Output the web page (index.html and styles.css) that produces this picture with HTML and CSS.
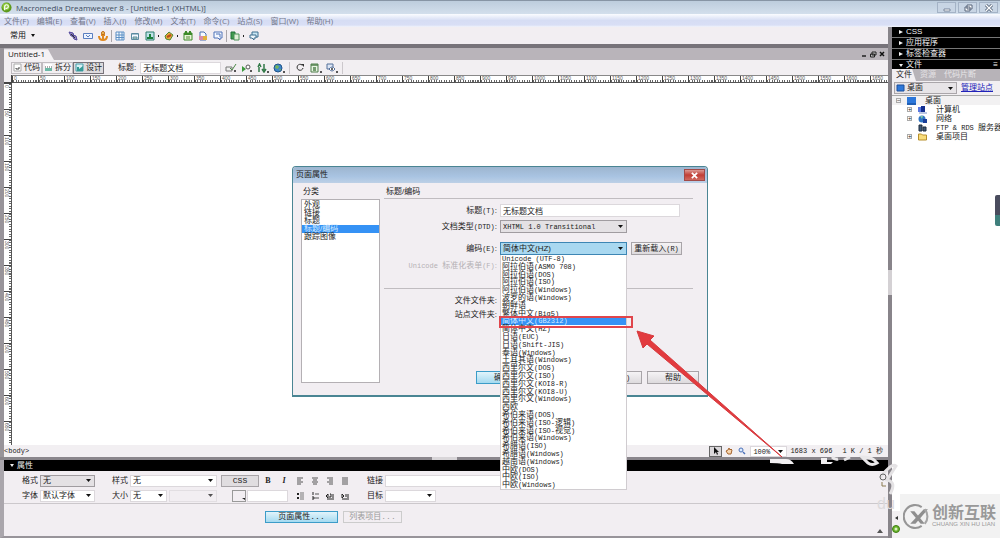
FILE: index.html
```html
<!DOCTYPE html>
<html lang="zh-CN">
<head>
  <meta charset="UTF-8">
  <meta name="viewport" content="width=device-width, initial-scale=1.0">
  <title>Macromedia Dreamweaver 8 - [Untitled-1 (XHTML)]</title>
  <link rel="stylesheet" href="styles.css">
</head>
<body>
  <header class="titlebar">
    <svg class="app-logo" viewBox="0 0 12 12"><circle cx="6" cy="6" r="5.5" fill="#5d9a1c"/><circle cx="5.5" cy="5" r="4" fill="#8cc63a"/><path d="M4 9V5.500Q4 3 6 3T8 5Q8 7 6 7H5" fill="none" stroke="#fff" stroke-width="1.300"/></svg>
    <span class="title">Macromedia Dreamweaver 8 - [Untitled-1 (XHTML)]</span>
    <div class="window-buttons">
      <button aria-label="最小化"><svg viewBox="0 0 10 8"><path d="M2 5h6v2H2z" fill="#fff" stroke="#66758a" stroke-width=".8"/></svg></button>
      <button aria-label="还原"><svg viewBox="0 0 10 8"><path d="M4 1h5v4H4zM2 3h5v4H2z" fill="#fff" stroke="#56657a"/></svg></button>
      <button aria-label="关闭"><svg viewBox="0 0 10 8"><path d="M2 1l6 6M8 1L2 7" stroke="#56657a" stroke-width="3"/><path d="M2 1l6 6M8 1L2 7" stroke="#fff" stroke-width="1.300"/></svg></button>
    </div>
  </header>

  <nav class="menubar">
    <a href="#">文件(F)</a>
    <a href="#">编辑(E)</a>
    <a href="#">查看(V)</a>
    <a href="#">插入(I)</a>
    <a href="#">修改(M)</a>
    <a href="#">文本(T)</a>
    <a href="#">命令(C)</a>
    <a href="#">站点(S)</a>
    <a href="#">窗口(W)</a>
    <a href="#">帮助(H)</a>
  </nav>

  <div class="workspace">
    <main class="main">
      <div class="insert-bar">
        <button class="category">常用 <i class="caret"></i></button>
        <button aria-label="超级链接"><svg viewBox="0 0 10 10"><path d="M1 1l4 1 1 3-3 0zM4 4l4 1 1 4-3-1z" fill="#9a8cc8" stroke="#51479a"/><path d="M3 3l4 4" stroke="#333"/></svg></button>
        <button aria-label="电子邮件链接"><svg viewBox="0 0 10 10"><path d="M.5 2.500h9v5h-9z" fill="#eef4ff" stroke="#5b7fc0"/><path d="M3 4l2 2 2-2" fill="none" stroke="#5b7fc0"/></svg></button>
        <button aria-label="命名锚记"><svg viewBox="0 0 10 10"><path d="M5 2v7M1 5q0 4 4 4t4-4M3 4h4" fill="none" stroke="#e08a20" stroke-width="2"/><circle cx="5" cy="2" r="1.500" fill="#fbd060" stroke="#b8651a"/></svg></button>
        <hr>
        <button aria-label="表格"><svg viewBox="0 0 10 10"><path d="M1 1h8v8H1zM1 4h8M1 6.500h8M4 1v8M7 1v8" fill="#f4f9ff" stroke="#5d8fc4"/></svg></button>
        <button aria-label="插入 Div 标签"><svg viewBox="0 0 10 10"><path d="M1.500 2.500h7v6h-7z" fill="#f4f9ff" stroke="#5a8aa0"/><path d="M2 3h6M3 6h4v2H3z" stroke="#5a8aa0" fill="#b9d6b9"/></svg></button>
        <button class="drop" aria-label="图像"><svg viewBox="0 0 10 10"><path d="M1 1h8v8H1z" fill="#bfe2e8" stroke="#2f7f70"/><path d="M2 8V6h2V3h2v3h2v2z" fill="#1c7f3c"/></svg></button>
        <button class="drop" aria-label="媒体"><svg viewBox="0 0 10 10"><path d="M1 5l4-4 4 3-3 5-4-1z" fill="#e8a83a" stroke="#4f8a34"/><path d="M3 6l4-2" stroke="#b84c1c" stroke-width="2"/></svg></button>
        <button aria-label="日期"><svg viewBox="0 0 10 10"><path d="M1 2h8v7H1z" fill="#e8f4d8" stroke="#3e8a2a"/><path d="M1 3h8M3 0v3M7 0v3" stroke="#3e8a2a" stroke-width="2"/><path d="M4 5v3M6 5v3" stroke="#56883a"/></svg></button>
        <button aria-label="模板"><svg viewBox="0 0 10 10"><path d="M2 1h4l2 2v6H2z" fill="#f6fafe" stroke="#4a6eb0"/><path d="M1 5h4v4H1z" fill="#d88ca8"/><path d="M5 5h4v4H5z" fill="#e2b13c"/></svg></button>
        <button aria-label="注释"><svg viewBox="0 0 10 10"><path d="M1 1h8v6H7v2L5 7H1z" fill="#f4f8ff" stroke="#4f72b8"/><path d="M3 3h4v3" fill="none" stroke="#4f72b8"/></svg></button>
        <hr>
        <button class="drop" aria-label="模板列表"><svg viewBox="0 0 10 10"><path d="M1 1h4v7H1z" fill="#3f9c4e" stroke="#23703a"/><path d="M4 3h5v6H4z" fill="#e0f0d8" stroke="#4c9158"/></svg></button>
        <button aria-label="标签选择器"><svg viewBox="0 0 10 10"><path d="M3 1h6v5H3z" fill="#c9e6f4" stroke="#3d6e90"/><path d="M1 4h6v3H5v2L3 7H1z" fill="#eef6fb" stroke="#3d6e90"/></svg></button>
      </div>

      <section class="document">
        <div class="doc-tabs">
          <a href="#" class="doc-tab">Untitled-1</a>
          <div class="doc-buttons">
            <button aria-label="最小化文档"><svg viewBox="0 0 8 8"><path d="M2 6h4" stroke="#222" stroke-width="1.500"/></svg></button>
            <button aria-label="还原文档"><svg viewBox="0 0 8 8"><path d="M3 2h4v3H3zM1.500 4h4v3h-4z" fill="#bbb" stroke="#222"/></svg></button>
            <button aria-label="关闭文档"><svg viewBox="0 0 8 8"><path d="M2 2l4 4M6 2L2 6" stroke="#111" stroke-width="1.500"/></svg></button>
          </div>
        </div>

        <div class="doc-toolbar">
          <div class="view-buttons">
            <button><svg viewBox="0 0 9 9"><path d="M1 1h7v7H1z" fill="#fff" stroke="#aaa"/><path d="M3 5v1h3V4" fill="none" stroke="#444"/></svg>代码</button>
            <button><svg viewBox="0 0 9 9"><path d="M1 1h7v4H1z" fill="#fff"/><path d="M1 5h7v3H1z" fill="#6cb9a6"/><path d="M1 4h7" stroke="#555" stroke-dasharray="1 1"/></svg>拆分</button>
            <button class="on"><svg viewBox="0 0 9 9"><path d="M1 1h7v7H1z" fill="#d9f1f5" stroke="#45a0ad"/><path d="M2 8V4h2v2l4-3v5z" fill="#369a96"/></svg>设计</button>
          </div>
          <label for="docTitle">标题:</label>
          <input id="docTitle" type="text" value="无标题文档">
          <div class="doc-icons">
            <button aria-label="浏览器检查"><svg viewBox="0 0 12 10"><path d="M1 4h6v4H1z" fill="#eee" stroke="#777"/><path d="M5 5l2 2 4-6" fill="none" stroke="#4d8b48"/><path d="M9 8h2" stroke="#222" stroke-width="1.500"/></svg></button>
            <button aria-label="验证标记"><svg viewBox="0 0 12 10"><path d="M1 3l4 3-4 3z" fill="#3c9a3c"/><circle cx="7" cy="4" r="2" fill="#fff" stroke="#555"/><path d="M9 8h2" stroke="#222" stroke-width="1.500"/></svg></button>
            <button aria-label="文件管理"><svg viewBox="0 0 12 10"><path d="M2 9V4M1 4l1.500-3L4 4M7 1v6M5 6l2 3 2-3" fill="none" stroke="#327a48" stroke-width="1.500"/><path d="M10 9h2" stroke="#222" stroke-width="1.500"/></svg></button>
            <button aria-label="在浏览器中预览"><svg viewBox="0 0 12 10"><circle cx="5" cy="5" r="4" fill="#3f86c9" stroke="#225488"/><path d="M3 2l3 1-1 3-3-1zM6 6h2l-1 2z" fill="#75b75b"/><path d="M10 9h2" stroke="#222" stroke-width="1.500"/></svg></button>
            <hr>
            <button aria-label="刷新"><svg viewBox="0 0 12 10"><path d="M9 5a3 3 0 1 1-1-3" fill="none" stroke="#333"/><path d="M7 1h3v3z" fill="#333"/></svg></button>
            <button aria-label="视图选项"><svg viewBox="0 0 12 10"><path d="M1 1h7v8H1z" fill="#e7f4e2" stroke="#4f7f4a"/><path d="M1 2h7M3 5h3M3 7h3" stroke="#4f7f4a" stroke-width="1.500"/><path d="M10 9h2" stroke="#222" stroke-width="1.500"/></svg></button>
            <button aria-label="可视化助理"><svg viewBox="0 0 12 10"><path d="M1 1h6v5H1z" fill="#dde6f5" stroke="#55709a"/><path d="M3 6q3-4 6 0-3 4-6 0z" fill="#fff" stroke="#55709a"/><circle cx="6" cy="6" r="1" fill="#333"/><path d="M10 9h2" stroke="#222" stroke-width="1.500"/></svg></button>
            <hr>
          </div>
        </div>

        <div class="canvas">
          <div class="corner"></div>
          <div class="ruler ruler-x" id="rulerX"></div>
          <div class="ruler ruler-y" id="rulerY"></div>
          <div class="page"></div>
        </div>

        <div class="statusbar">
          <span class="tag">&lt;body&gt;</span>
          <button class="on" aria-label="选取工具"><svg viewBox="0 0 8 8"><path d="M2 0v7l2-2 1 3 1-1-1-2h2z" fill="#111"/></svg></button>
          <button aria-label="手形工具"><svg viewBox="0 0 8 8"><path d="M1 4l2 3h3l1-4-1-1-1 1-1-2-1 2z" fill="#f6d5ae" stroke="#a5632c"/></svg></button>
          <button aria-label="缩放工具"><svg viewBox="0 0 8 8"><circle cx="3" cy="3" r="2" fill="#dcebff" stroke="#4a70b8"/><path d="M5 5l2 2" stroke="#4a70b8" stroke-width="1.500"/></svg></button>
          <select aria-label="缩放比率"><option>100%</option></select>
          <span class="size">1683 x 696</span>
          <span class="speed">1 K / 1 秒</span>
        </div>
      </section>

      <div class="splitter-x"><i></i></div>

      <section class="properties">
        <h2 class="prop-head"><i class="caret"></i>属性</h2>
        <div class="prop-grid">
          <div class="field"><label for="format">格式</label><select id="format" class="raised"><option>无</option></select></div>
          <div class="field"><label for="style">样式</label><select id="style"><option>无</option></select></div>
          <div class="field"><button class="css-button">CSS</button><button class="letter" aria-label="粗体"><b>B</b></button><button class="letter" aria-label="斜体"><b><i>I</i></b></button></div>
          <div class="field icons">
            <button aria-label="左对齐"><svg viewBox="0 0 8 8"><path d="M1 1h6M1 3h4M1 5h6M1 7h4" stroke="#555"/></svg></button>
            <button aria-label="居中对齐"><svg viewBox="0 0 8 8"><path d="M1 1h6M2 3h4M1 5h6M2 7h4" stroke="#555"/></svg></button>
            <button aria-label="右对齐"><svg viewBox="0 0 8 8"><path d="M1 1h6M3 3h4M1 5h6M3 7h4" stroke="#555"/></svg></button>
            <button aria-label="两端对齐"><svg viewBox="0 0 8 8"><path d="M1 1h6M1 3h6M1 5h6M1 7h6" stroke="#555"/></svg></button>
          </div>
          <div class="field link"><label for="link">链接</label><input id="link" type="text"></div>

          <div class="field"><label for="font">字体</label><select id="font"><option>默认字体</option></select></div>
          <div class="field"><label for="fontSize">大小</label><select id="fontSize" class="small"><option>无</option></select><select class="unit" aria-label="单位" disabled><option></option></select></div>
          <div class="field color"><button class="swatch" aria-label="文本颜色"><svg viewBox="0 0 4 3"><path d="M1 0h3v2z" fill="#222"/></svg></button><input type="text" aria-label="颜色值"></div>
          <div class="field icons">
            <button aria-label="项目列表"><svg viewBox="0 0 8 8"><path d="M1 2h2M1 6h2" stroke="#222" stroke-width="2"/><path d="M4 1h4M4 3h4M4 5h4M4 7h4" stroke="#777"/></svg></button>
            <button aria-label="编号列表"><svg viewBox="0 0 8 8"><path d="M2 0v3M1 5h2v2H1" fill="none" stroke="#222"/><path d="M4 2h4M4 6h4" stroke="#555"/></svg></button>
            <button aria-label="文本凸出"><svg viewBox="0 0 8 8"><path d="M0 4l2-2v4zM4 2h1v3H3M7 2v4M1 7h7" stroke="#222" fill="none"/></svg></button>
            <button aria-label="文本缩进"><svg viewBox="0 0 8 8"><path d="M3 4L1 2v4zM5 2v3M7 2v4M1 7h7" stroke="#222" fill="none"/></svg></button>
          </div>
          <div class="field"><label for="target">目标</label><select id="target" class="target"><option></option></select></div>
        </div>
        <div class="prop-actions">
          <button class="button primary">页面属性...</button>
          <button class="button" disabled>列表项目...</button>
          <svg class="collapse" viewBox="0 0 8 6"><path d="M1 5l3-4 3 4z" fill="#555"/></svg>
        </div>
      </section>
    </main>

    <div class="splitter-y"><i></i></div>

    <aside class="panels">
      <div class="panel-heads">
        <h2><i class="caret closed"></i>CSS</h2>
        <h2><i class="caret closed"></i>应用程序</h2>
        <h2><i class="caret closed"></i>标签检查器</h2>
        <h2><i class="caret"></i>文件<span class="panel-menu">≡</span></h2>
      </div>
      <div class="panel-tabs">
        <a href="#" class="active">文件</a>
        <a href="#">资源</a>
        <a href="#">代码片断</a>
      </div>
      <div class="site-row">
        <svg viewBox="0 0 9 9"><path d="M1 1h7v6H1z" fill="#2f78d8" stroke="#1c4f9c"/></svg>
        <select aria-label="站点"><option>桌面</option></select>
        <a href="#">管理站点</a>
      </div>
      <ul class="tree">
        <li class="root"><span class="box">−</span><svg viewBox="0 0 9 8"><path d="M0 0h9v8H0z" fill="#2c77da"/><path d="M0 7h9" stroke="#15498f"/></svg><span>桌面</span></li>
        <li><span class="box">+</span><svg viewBox="0 0 9 8"><path d="M0 1h4v5H0z" fill="#5a78e0"/><path d="M3 0h4v6H3z" fill="#132f90"/><path d="M1 7h8" stroke="#7b92c8"/></svg><span>计算机</span></li>
        <li><span class="box">+</span><svg viewBox="0 0 9 8"><circle cx="4" cy="4" r="3.500" fill="#2f74c4"/><path d="M2 1l3 0-1 3z" fill="#7cc7a4"/><path d="M5 4h4v4H5z" fill="#1b3f98"/></svg><span>网络</span></li>
        <li><span class="box none"></span><svg viewBox="0 0 9 8"><path d="M1 1h3v6H1zM5 3h3v4H5z" fill="#405a78" stroke="#1c2a3c"/></svg><span><span class="en">FTP &amp; RDS </span>服务器</span></li>
        <li><span class="box">+</span><svg viewBox="0 0 9 8"><path d="M.5 1h3l1 1h4v5h-8z" fill="#f8dc7a" stroke="#b78f2c"/></svg><span>桌面项目</span></li>
      </ul>
      <div class="panel-log">
        <svg viewBox="0 0 8 8"><path d="M6 2v4L3 4z" fill="#333"/></svg>
        <svg viewBox="0 0 8 8"><circle cx="4" cy="4" r="3.500" fill="#6cb52d" stroke="#3e7d15"/><circle cx="4" cy="4" r="1.500" fill="#d9f2c0"/></svg>
      </div>
    </aside>
  </div>

  <form class="dialog" role="dialog" aria-labelledby="dialogTitle">
    <div class="dialog-title">
      <span id="dialogTitle">页面属性</span>
      <button type="button" class="dialog-close" aria-label="关闭"><svg viewBox="0 0 8 8"><path d="M1 1l6 6M7 1L1 7" stroke="#fff" stroke-width="2"/></svg></button>
    </div>
    <div class="dialog-body">
      <div class="categories">
        <h3>分类</h3>
        <ul>
          <li>外观</li>
          <li>链接</li>
          <li>标题</li>
          <li class="selected">标题/编码</li>
          <li>跟踪图像</li>
        </ul>
      </div>
      <div class="settings">
        <h3>标题/编码</h3>
        <div class="rows">
          <label for="pageTitle">标题<span class="en">(T)</span>:</label>
          <input id="pageTitle" type="text" value="无标题文档">
          <label for="doctype">文档类型<span class="en">(DTD)</span>:</label>
          <select id="doctype" class="raised latin"><option>XHTML 1.0 Transitional</option></select>
          <label for="encoding" class="spaced">编码<span class="en">(E)</span>:</label>
          <div class="encoding spaced">
            <select id="encoding" class="raised open"><option>简体中文(HZ)</option></select>
            <button type="button" class="button">重新载入<span class="en">(R)</span></button>
            <ul class="options" role="listbox" aria-label="编码">
              <li><span class="en">Unicode (UTF-8)</span></li>
              <li>阿拉伯语<span class="en">(ASMO 708)</span></li>
              <li>阿拉伯语<span class="en">(DOS)</span></li>
              <li>阿拉伯语<span class="en">(ISO)</span></li>
              <li>阿拉伯语<span class="en">(Windows)</span></li>
              <li>波罗的语<span class="en">(Windows)</span></li>
              <li>朝鲜语</li>
              <li>繁体中文<span class="en">(Big5)</span></li>
              <li class="selected">简体中文<span class="en">(GB2312)</span></li>
              <li>简体中文<span class="en">(HZ)</span></li>
              <li>日语<span class="en">(EUC)</span></li>
              <li>日语<span class="en">(Shift-JIS)</span></li>
              <li>泰语<span class="en">(Windows)</span></li>
              <li>土耳其语<span class="en">(Windows)</span></li>
              <li>西里尔文<span class="en">(DOS)</span></li>
              <li>西里尔文<span class="en">(ISO)</span></li>
              <li>西里尔文<span class="en">(KOI8-R)</span></li>
              <li>西里尔文<span class="en">(KOI8-U)</span></li>
              <li>西里尔文<span class="en">(Windows)</span></li>
              <li>西欧</li>
              <li>希伯来语<span class="en">(DOS)</span></li>
              <li>希伯来语<span class="en">(ISO-</span>逻辑<span class="en">)</span></li>
              <li>希伯来语<span class="en">(ISO-</span>视觉<span class="en">)</span></li>
              <li>希伯来语<span class="en">(Windows)</span></li>
              <li>希腊语<span class="en">(ISO)</span></li>
              <li>希腊语<span class="en">(Windows)</span></li>
              <li>越南语<span class="en">(Windows)</span></li>
              <li>中欧<span class="en">(DOS)</span></li>
              <li>中欧<span class="en">(ISO)</span></li>
              <li>中欧<span class="en">(Windows)</span></li>
            </ul>
          </div>
          <span class="disabled"><span class="en">Unicode </span>标准化表单<span class="en">(F)</span>:</span>
        </div>
        <hr>
        <div class="rows folders">
          <span>文件文件夹:</span>
          <span>站点文件夹:</span>
        </div>
        <div class="dialog-actions">
          <button type="button" class="button primary">确定</button>
          <button type="button" class="button">取消</button>
          <button type="button" class="button">应用<span class="en">(A)</span></button>
          <button type="button" class="button">帮助</button>
        </div>
      </div>
    </div>
  </form>

  <div class="highlight"></div>
  <svg class="arrow" viewBox="0 0 148 130"><path d="M1 1l17 5-4 4 132 117-135-113-4 4z" fill="#e23b3f" stroke="#d63a3e"/></svg>

  <div class="side-widget"></div>
  <svg class="smudge" viewBox="0 0 150 60">
    <path d="M10 11h16q5 0 8 5l-12 0q-4-1-12-1zM61 10h6v4h6l-2 2H61z" fill="#f1eff1"/>
    <path d="M72 9q3 3 6 2M84 12l6-3M102 9q8 0 12 3l3 3q-5 3-9 0z" fill="none" stroke="#e9e7e9" stroke-width="3"/>
    <path d="M120 30q12-16 16-12l-9 14q10 2 3 14" fill="none" stroke="#e4e2e4" stroke-width="3"/>
    <circle cx="123" cy="29" r="3" fill="none" stroke="#666"/>
    <path d="M122 34v4h4" fill="none" stroke="#8a7a50"/>
  </svg>
  <span class="faint">du</span>
  <div class="brand">
    <svg viewBox="0 0 26 26"><path d="M18 4A11 11 0 1 0 18 22" fill="none" stroke="#969696" stroke-width="2"/><path d="M7 8h4l10 12h-4zM20 6h4L12 20H7z" fill="#8f8f8f"/><path d="M21 6a11 11 0 0 1 0 14" fill="none" stroke="#a5a5a5" stroke-width="2"/></svg>
    <div>
      <strong>创新互联</strong>
      <small>CHUANG XIN HU LIAN</small>
    </div>
  </div>

  <script>
    function drawRuler(id, last) {
      const ruler = document.getElementById(id);
      for (let n = 0; n <= last; n += 50) {
        const mark = document.createElement('span');
        mark.textContent = n;
        ruler.appendChild(mark);
      }
    }

    drawRuler('rulerX', 1650);
    drawRuler('rulerY', 650);
  </script>
</body>
</html>
```
FILE: styles.css
```css
* {
  box-sizing: border-box;
}
html, body {
  height: 100%;
}
body {
  margin: 0;
  display: flex;
  flex-direction: column;
  position: relative;
  overflow: hidden;
  font-family: "Liberation Sans", "Noto Sans CJK SC", sans-serif;
  font-size: 8px;
  line-height: 10px;
  color: #222;
  background-color: #f2eef2;
}
h2, h3, ul {
  margin: 0;
  padding: 0;
  font-size: 8px;
  font-weight: normal;
  list-style: none;
}
button, input, select {
  font: inherit;
  color: inherit;
  margin: 0;
  padding: 0;
  border: 0;
  border-radius: 0;
  background: none;
}
button {
  display: flex;
  align-items: center;
  justify-content: center;
  white-space: nowrap;
}
svg {
  display: block;
  flex: none;
}
a {
  color: inherit;
  text-decoration: none;
}
hr {
  margin: 0;
  border: 0;
}
input, select {
  height: 12px;
  padding: 0 2px;
  border: 1px solid #dcd8dc;
  background-color: #fff;
}
select {
  appearance: none;
  padding-right: 10px;
  background-image: url("data:image/svg+xml,%3Csvg xmlns='http://www.w3.org/2000/svg' width='5' height='3'%3E%3Cpath d='M0 0h5L2.5 3z' fill='%23111'/%3E%3C/svg%3E");
  background-repeat: no-repeat;
  background-position: right 3px center;
}
select:disabled {
  background-color: #f2eef2;
  opacity: .7;
}
.raised {
  border-color: #a09ca0;
  background-color: #e4e1e4;
}
.en {
  font-family: "Liberation Mono", monospace;
  font-size: 7px;
}
.caret {
  display: inline-block;
  border: 3px solid transparent;
  border-top: 4px solid currentColor;
  border-bottom: 0;
}
.caret.closed {
  border: 2px solid transparent;
  border-left: 4px solid currentColor;
  border-right: 0;
}
.button {
  height: 13px;
  border: 1px solid #a8a4a8;
  background-image: linear-gradient(#f5f3f5, #dddadd);
}
.button.primary {
  border-color: #3c9cc8;
  background-image: linear-gradient(#e2f4fb, #a4daf0);
}
.button:disabled {
  color: #999;
  border-color: #ccc;
  background-image: none;
}

/* title bar and menu */
.titlebar {
  display: flex;
  align-items: center;
  height: 14px;
  padding: 0 2px 0 1px;
  border-top: 1px solid #8795a5;
  background-image: linear-gradient(#bdcddd, #d3dfec);
  color: #3d4a5c;
}
.app-logo {
  width: 11px;
  height: 11px;
}
.title {
  flex: 1;
  padding-left: 4px;
  font-family: "Open Sans", sans-serif;
}
.window-buttons {
  display: flex;
  gap: 2px;
}
.window-buttons button {
  width: 19px;
  height: 11px;
  border: 1px solid #a4b3c6;
  background-color: #c8d5e4;
}
.window-buttons svg {
  width: 10px;
  height: 8px;
}
.menubar {
  display: flex;
  align-items: center;
  gap: 8px;
  height: 13px;
  padding-left: 4px;
  background-image: linear-gradient(#fafcff, #d6ddf4 50%, #d9dff6 85%, #f2f4fa);
  color: #73778a;
  font-family: "Open Sans", "Noto Sans CJK SC", sans-serif;
}

.workspace {
  flex: 1;
  display: flex;
  min-height: 0;
}
.main {
  flex: 1;
  display: flex;
  flex-direction: column;
  min-width: 0;
}

/* insert bar */
.insert-bar {
  display: flex;
  align-items: center;
  gap: 5px;
  height: 17px;
  padding-left: 10px;
}
.insert-bar svg {
  width: 10px;
  height: 10px;
}
.insert-bar hr {
  width: 1px;
  height: 12px;
  margin: 0 -2px;
  background-color: #aaa6aa;
}
.category {
  width: 53px;
  justify-content: flex-start;
  gap: 5px;
  color: #111;
}
.category .caret {
  border-width: 3px 2px 0;
}
.drop::after {
  content: "";
  width: 1px;
  height: 2px;
  margin-left: 3px;
  background-color: #222;
}

/* document window */
.document {
  flex: 1;
  display: flex;
  flex-direction: column;
  min-height: 0;
  padding-left: 4px;
  border-top: 4px solid #77737a;
  background-color: #98949a;
}
.doc-tabs {
  display: flex;
  justify-content: space-between;
  height: 12px;
  background-color: #b9b4ba;
}
.doc-tab {
  width: 50px;
  padding: 1px 0 0 4px;
  background-color: #f4f1f4;
  clip-path: polygon(0 10%, 88% 10%, 100% 100%, 0 100%);
  font-family: "Open Sans", sans-serif;
}
.doc-buttons {
  display: flex;
  gap: 1px;
  padding-right: 2px;
}
.doc-buttons svg {
  width: 8px;
  height: 8px;
}
.doc-toolbar {
  display: flex;
  align-items: center;
  height: 15px;
  padding-left: 7px;
  background-color: #f2eff2;
}
.view-buttons {
  display: flex;
  margin-right: 14px;
}
.view-buttons button {
  width: 31px;
  height: 12px;
  gap: 2px;
  border: 1px solid #c0bcc0;
}
.view-buttons .on {
  border-color: #77737a;
  background-color: #dedbde;
}
.view-buttons svg {
  width: 9px;
  height: 9px;
}
.doc-toolbar input {
  width: 81px;
  margin: 0 4px;
}
.doc-icons {
  display: flex;
  align-items: center;
  gap: 4px;
}
.doc-icons svg {
  width: 12px;
  height: 10px;
}
.doc-icons hr {
  width: 1px;
  height: 12px;
  background-color: #ccc8cc;
}

/* rulers: one mark for every 50 pixels of the page */
.canvas {
  flex: 1;
  display: grid;
  grid-template: 8px 1fr / 8px 1fr;
  min-height: 0;
  background-color: #fff;
}
.corner {
  border-right: 1px solid #444;
  border-bottom: 1px solid #444;
  background-color: #f2eff2;
}
.ruler {
  display: flex;
  min-width: 0;
  min-height: 0;
  overflow: hidden;
  font-size: 5px;
  line-height: 5px;
  color: #555;
}
.ruler span {
  flex: none;
}
.ruler-x {
  border-top: 1px solid #888;
  border-bottom: 1px solid #555;
}
.ruler-x span {
  width: 26px;
  padding-left: 1px;
  border-left: 1px solid #444;
  background: repeating-linear-gradient(to right, #666 0 1px, transparent 1px 10%) bottom / 100% 2px no-repeat;
}
.ruler-y {
  flex-direction: column;
  border-right: 1px solid #555;
}
.ruler-y span {
  height: 26px;
  padding: 1px 2px 0 0;
  border-top: 1px solid #444;
  writing-mode: vertical-rl;
  background: repeating-linear-gradient(to bottom, #666 0 1px, transparent 1px 10%) right / 2px 100% no-repeat;
}

.statusbar {
  display: flex;
  align-items: center;
  height: 12px;
  padding-right: 5px;
  background-color: #f2eff2;
  font-family: "Liberation Mono", "Noto Sans CJK SC", monospace;
  font-size: 7px;
}
.statusbar .tag {
  flex: 1;
}
.statusbar button {
  width: 13px;
  height: 11px;
}
.statusbar .on {
  border: 1px solid #666;
  background-color: #dad7da;
}
.statusbar svg {
  width: 8px;
  height: 8px;
}
.statusbar select {
  width: 37px;
  height: 11px;
  margin: 0 3px 0 2px;
}
.statusbar .speed {
  margin-left: 10px;
}

.splitter-x {
  display: flex;
  justify-content: center;
  height: 3px;
  background-color: #8a868c;
}
.splitter-x i {
  width: 25px;
  background-color: #d8d5d8;
}
.splitter-y {
  display: flex;
  align-items: center;
  width: 4px;
  background-color: #88848a;
}
.splitter-y i {
  width: 4px;
  height: 25px;
  background-color: #d4d1d4;
}

/* properties panel */
.properties {
  padding-bottom: 2px;
  border-left: 4px solid #aaa6ac;
  border-bottom: 2px solid #98949a;
}
.prop-head {
  display: flex;
  align-items: center;
  gap: 3px;
  height: 11px;
  padding-left: 6px;
  background-color: #000;
  color: #eee;
}
.prop-head .caret {
  border-width: 3px 2px 0;
}
.prop-grid {
  display: grid;
  grid-template-columns: 90px 109px 75px 71px 1fr;
  row-gap: 2px;
  padding: 3px 0 1px 18px;
  border-bottom: 1px solid #ccc8cc;
}
.field {
  display: flex;
  align-items: center;
  height: 13px;
  gap: 2px;
}
.field label {
  width: 16px;
}
.field select {
  width: 55px;
}
.field #style {
  width: 87px;
}
.field .small {
  width: 37px;
}
.field .unit {
  width: 48px;
}
.field .target {
  width: 51px;
}
.link input {
  width: 220px;
}
.css-button {
  width: 38px;
  height: 12px;
  border: 1px solid #a8a4a8;
  background-color: #e0dde0;
  font-family: "Liberation Mono", monospace;
}
.letter {
  width: 14px;
  font-family: "Liberation Serif", serif;
}
.icons {
  gap: 7px;
}
.icons svg {
  width: 8px;
  height: 8px;
}
.color {
  padding-left: 11px;
  gap: 1px;
}
.swatch {
  width: 14px;
  height: 12px;
  align-items: flex-end;
  justify-content: flex-end;
  border: 1px solid #999;
}
.swatch svg {
  width: 4px;
  height: 3px;
}
.color input {
  width: 41px;
}
.prop-actions {
  display: flex;
  gap: 5px;
  height: 30px;
  padding: 7px 4px 0 261px;
  font-family: "Liberation Mono", "Noto Sans CJK SC", monospace;
}
.prop-actions .primary {
  width: 73px;
}
.prop-actions .button {
  height: 12px;
}
.prop-actions .button:disabled {
  width: 59px;
}
.collapse {
  width: 8px;
  height: 6px;
  margin-left: auto;
  align-self: flex-end;
}

/* right side panels */
.panels {
  width: 108px;
  display: flex;
  flex-direction: column;
  overflow: hidden;
  background-color: #fff;
}
.panel-heads {
  display: grid;
  grid-auto-rows: 1fr;
  height: 42px;
  color: #f4f4f4;
  background-color: #000;
}
.panel-heads h2 {
  display: flex;
  align-items: center;
  gap: 3px;
  padding: 0 2px 0 7px;
  border-bottom: 1px solid #777;
}
.panel-heads .caret {
  border-width: 3px 2px 0;
}
.panel-heads .caret.closed {
  border-width: 2px 0 2px 4px;
}
.panel-menu {
  margin-left: auto;
}
.panel-tabs {
  display: flex;
  height: 12px;
  background-color: #b7b3b8;
  color: #e6e4e6;
}
.panel-tabs a {
  padding: 1px 4px;
}
.panel-tabs .active {
  width: 24px;
  background-color: #f2eff2;
  color: #222;
  clip-path: polygon(0 0, 84% 0, 100% 100%, 0 100%);
}
.site-row {
  display: flex;
  align-items: center;
  height: 15px;
  padding-left: 2px;
  border-bottom: 1px solid #aaa;
  background-color: #f2eff2;
}
.site-row svg {
  width: 9px;
  height: 9px;
  margin: 0 -11px 0 2px;
  z-index: 1;
}
.site-row select {
  width: 63px;
  padding-left: 12px;
  border-color: #aaa6aa;
  background-color: #e7e4e7;
}
.site-row a {
  margin-left: 4px;
  color: #2222b8;
  text-decoration: underline;
}
.tree {
  flex: 1;
}
.tree li {
  display: flex;
  align-items: center;
  height: 9px;
  padding-left: 15px;
  white-space: nowrap;
}
.tree .root {
  padding-left: 4px;
  background-color: #f2f1f2;
}
.tree svg {
  width: 9px;
  height: 8px;
  margin: 0 9px 0 6px;
}
.tree .box {
  flex: none;
  width: 5px;
  height: 5px;
  border: 1px solid #aaa;
  font-size: 6px;
  line-height: 3px;
}
.tree .none {
  border-color: transparent;
}
.panel-log {
  width: 8px;
  padding-bottom: 5px;
  background-color: #f2eff2;
}
.panel-log svg {
  width: 8px;
  height: 8px;
  margin-top: 3px;
}

/* page properties window */
.dialog {
  position: absolute;
  left: 292px;
  top: 166px;
  width: 416px;
  height: 231px;
  border: 1px solid #4a8593;
  border-bottom-width: 2px;
  border-radius: 4px 4px 0 0;
  background-color: #f2eef2;
}
.dialog-title {
  display: flex;
  align-items: center;
  justify-content: space-between;
  height: 16px;
  padding: 0 2px 0 3px;
  border-radius: 3px 3px 0 0;
  background-image: linear-gradient(#9db5cf, #a9c4e2 60%, #bdd0e6);
}
.dialog-close {
  width: 21px;
  height: 12px;
  border: 1px solid #a24a48;
  background-image: linear-gradient(#dc9a94, #c13e36 50%, #d06a60);
}
.dialog-close svg {
  width: 7px;
  height: 7px;
}
.dialog-body {
  display: flex;
  gap: 4px;
  padding: 4px 8px 0;
}
.categories {
  width: 79px;
}
.categories h3, .settings h3 {
  height: 12px;
  padding-left: 2px;
}
.categories ul {
  height: 184px;
  padding-top: 1px;
  border: 1px solid #b4b0b4;
  background-color: #fff;
}
.categories li {
  height: 8px;
  padding-left: 2px;
  line-height: 8px;
}
.selected {
  background-color: #3592f5;
  color: #d4eaff;
}
.settings {
  flex: 1;
}
.settings h3 {
  width: 309px;
  border-bottom: 1px solid #c0bcc0;
}
.rows {
  display: grid;
  grid-template-columns: 113px 1fr;
  column-gap: 3px;
  row-gap: 3px;
  padding-top: 5px;
  align-items: center;
}
.rows > label, .rows > span {
  text-align: right;
}
.rows input {
  width: 180px;
  height: 13px;
}
.rows select {
  width: 127px;
  height: 13px;
}
.rows .latin {
  font-family: "Liberation Mono", monospace;
  font-size: 7px;
}
.rows .open {
  border-color: #3d86b4;
  background-color: #a9d8f0;
}
.rows .spaced {
  margin-top: 6px;
}
.rows .disabled {
  padding-top: 3px;
  color: #b4b0b4;
}
.encoding {
  position: relative;
  display: flex;
  gap: 4px;
}
.encoding .button {
  width: 51px;
}
.options {
  position: absolute;
  left: 0;
  top: 13px;
  width: 127px;
  height: 235px;
  display: grid;
  grid-auto-rows: 1fr;
  border: 1px solid #d0ccd0;
  border-top: 0;
  background-color: #fff;
}
.options li {
  min-height: 0;
  padding-left: 1px;
  line-height: 8px;
  white-space: nowrap;
}
.settings > hr {
  width: 309px;
  height: 1px;
  margin-top: 17px;
  background-color: #c0bcc0;
}
.folders {
  grid-template-columns: 113px;
  row-gap: 4px;
  padding-top: 7px;
}
.dialog-actions {
  display: flex;
  justify-content: flex-end;
  gap: 5px;
  margin-top: 51px;
}
.dialog-actions .button {
  width: 52px;
}

/* annotations over the window */
.highlight {
  position: absolute;
  left: 499px;
  top: 316px;
  width: 134px;
  height: 12px;
  border: 2px solid #e0454c;
}
.arrow {
  position: absolute;
  left: 636px;
  top: 330px;
  width: 148px;
  height: 130px;
}
.side-widget {
  position: absolute;
  right: 0;
  top: 195px;
  width: 5px;
  height: 31px;
  border-radius: 2px 0 0 2px;
  background-image: linear-gradient(#4a4c5e 65%, #3f7f7c 65%);
}
.smudge {
  position: absolute;
  left: 760px;
  top: 448px;
  width: 150px;
  height: 60px;
}
.faint {
  position: absolute;
  left: 877px;
  top: 496px;
  font-size: 16px;
  line-height: 16px;
  color: #dcdadc;
}
.brand {
  position: absolute;
  right: 0;
  bottom: 0;
  width: 100px;
  height: 44px;
  display: flex;
  align-items: center;
  gap: 2px;
  padding-left: 3px;
  background-color: #f2f2f2;
  color: #999;
}
.brand svg {
  width: 27px;
  height: 27px;
}
.brand strong, .brand small {
  display: block;
  white-space: nowrap;
}
.brand strong {
  font-size: 16px;
  line-height: 16px;
}
.brand small {
  font-size: 6px;
  line-height: 6px;
}
```
